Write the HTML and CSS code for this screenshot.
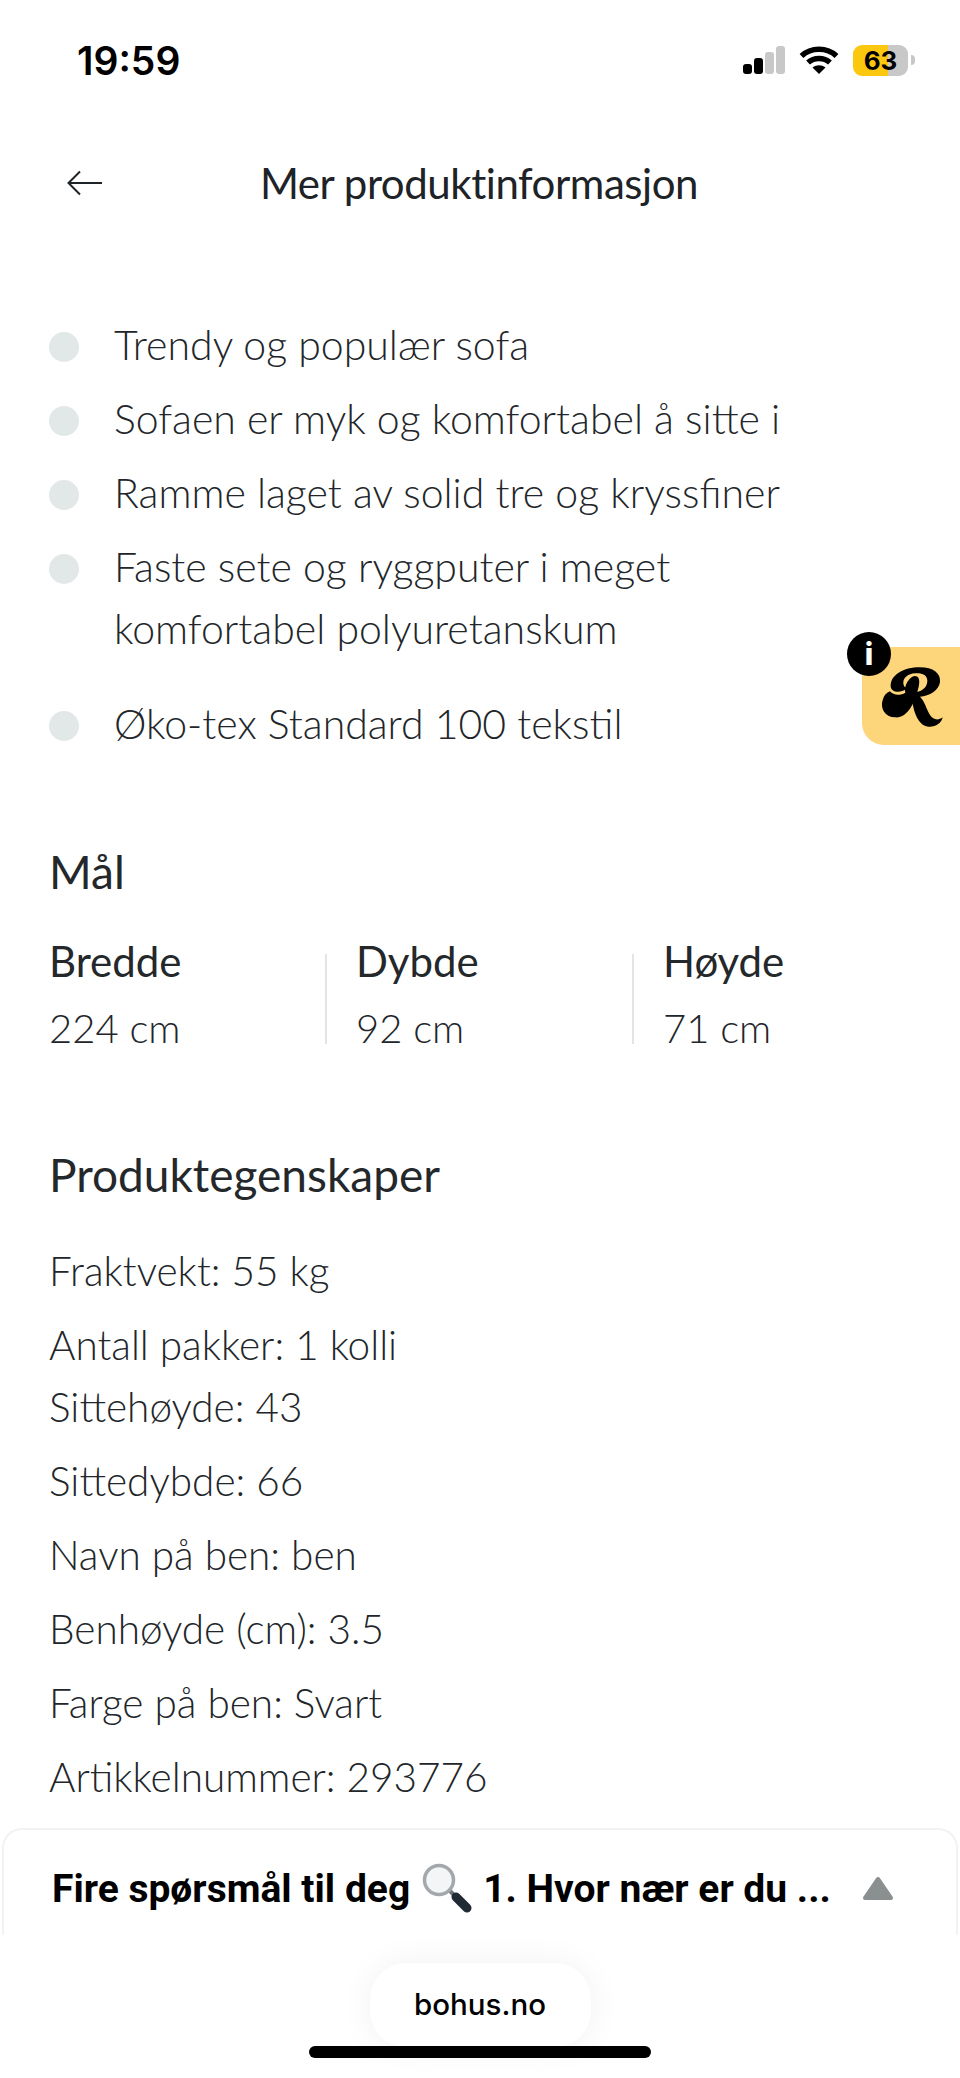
FILE: index.html
```html
<!DOCTYPE html>
<html lang="no">
<head>
<meta charset="utf-8">
<title>Mer produktinformasjon</title>
<link rel="stylesheet" href="styles.css">
</head>
<body>
<div class="page">
  <div class="status">
    <span class="time">19:59</span>
    <div class="status-icons">
      <svg class="signal" width="42" height="30" viewBox="0 0 42 30"><rect x="0" y="19" width="9" height="10" rx="3" fill="#000"/><rect x="11" y="13" width="9" height="16" rx="3" fill="#000"/><rect x="22" y="7" width="9" height="22" rx="3" fill="#c8c8c8"/><rect x="33" y="1" width="9" height="28" rx="3" fill="#c8c8c8"/></svg>
      <svg class="wifi" width="40" height="30" viewBox="0 0 40 30"><path d="M2.500 11C12 2 28 2 37.500 11M9 17.500C15 12 25 12 31 17.500" fill="none" stroke="#000" stroke-width="5.500"/><path d="M13.500 22.500C17.500 19.500 22.500 19.500 26.500 22.500L20 29Z" fill="#000"/></svg>
      <div class="battery"><span class="battery-level">63</span></div>
      <span class="battery-tip"></span>
    </div>
  </div>

  <header class="nav">
    <svg class="back" width="36" height="26" viewBox="0 0 36 26"><path d="M35 13H2M13 1.500L1.500 13L13 24.500" fill="none" stroke="#1d2327" stroke-width="2"/></svg>
    <h1 class="title">Mer produktinformasjon</h1>
  </header>

  <ul class="bullets">
    <li>Trendy og populær sofa</li>
    <li>Sofaen er myk og komfortabel å sitte i</li>
    <li>Ramme laget av solid tre og kryssfiner</li>
    <li class="two-line">Faste sete og ryggputer i meget<br>komfortabel polyuretanskum</li>
    <li>Øko-tex Standard 100 tekstil</li>
  </ul>

  <h2 class="heading measures-heading">Mål</h2>
  <div class="measures">
    <div class="measure"><strong>Bredde</strong><span>224 cm</span></div>
    <div class="measure"><strong>Dybde</strong><span>92 cm</span></div>
    <div class="measure"><strong>Høyde</strong><span>71 cm</span></div>
  </div>

  <h2 class="heading props-heading">Produktegenskaper</h2>
  <div class="props">
    <p>Fraktvekt: 55 kg</p>
    <p class="tight">Antall pakker: 1 kolli</p>
    <p>Sittehøyde: 43</p>
    <p>Sittedybde: 66</p>
    <p>Navn på ben: ben</p>
    <p>Benhøyde (cm): 3.5</p>
    <p>Farge på ben: Svart</p>
    <p>Artikkelnummer: 293776</p>
  </div>

  <div class="survey">
    <span class="survey-text">Fire spørsmål til deg</span>
    <svg class="loupe" width="50" height="50" viewBox="0 0 50 50"><path d="M27 27L33 33" stroke="#6d7278" stroke-width="4"/><path d="M34 34L45 45" stroke="#1f2a33" stroke-width="9" stroke-linecap="round"/><circle cx="17" cy="17" r="14.500" fill="#f3f5f7" stroke="#a4a8ad" stroke-width="3.500"/></svg>
    <span class="survey-text">1. Hvor nær er du ...</span>
    <svg class="caret" width="32" height="26" viewBox="0 0 32 26"><path d="M16 3L29 22H3Z" fill="#8a9090" stroke="#8a9090" stroke-width="4" stroke-linejoin="round"/></svg>
  </div>

  <div class="browser">
    <div class="url">bohus.no</div>
    <div class="home-bar"></div>
  </div>

  <aside class="reward">
    <svg class="reward-logo" width="90" height="80" viewBox="0 0 270 240"><path d="M62 78C62 45 100 22 150 22C190 22 212 40 210 65C208 90 178 108 150 110C165 125 168 145 180 165C190 180 205 182 218 172C215 190 195 202 175 200C150 198 138 170 132 150C128 130 124 116 112 112L120 96C150 100 172 85 172 62C172 45 155 38 135 40C115 42 100 52 100 68C100 78 106 84 112 84C96 100 62 100 62 78Z" fill="#000"/><path d="M134 48C148 48 150 62 146 80C134 130 112 175 75 172C45 172 30 145 38 120C42 106 50 98 60 94C70 106 90 108 106 98C100 75 120 50 134 48Z" fill="#000"/></svg>
    <span class="reward-info">i</span>
  </aside>
</div>
</body>
</html>
```
FILE: styles.css
```css
* { box-sizing: border-box; }
html, body { margin: 0; padding: 0; background: #fff; }
.page {
  position: relative;
  width: 960px;
  height: 2078px;
  overflow: hidden;
  background: #fff;
  color: #1d2327;
  font-family: "Lato", "Liberation Sans", sans-serif;
  font-weight: 300;
}
.status {
  height: 140px;
  padding: 38px 45px 0 77px;
  display: flex;
  justify-content: space-between;
  align-items: flex-start;
}
.time {
  font-family: "Inter", "Liberation Sans", sans-serif;
  font-weight: 600;
  font-size: 39px;
  line-height: 46px;
  color: #000;
}
.status-icons { display: flex; align-items: center; height: 44px; }
.signal { margin-right: 14px; }
.wifi { margin-right: 14px; }
.battery {
  width: 55px;
  height: 31px;
  border-radius: 9px;
  background: linear-gradient(90deg, #fcc80f 0 64%, #c8c8c8 64% 100%);
  display: flex;
  align-items: center;
  justify-content: center;
}
.battery-level {
  font-family: "Inter", "Liberation Sans", sans-serif;
  font-weight: 700;
  font-size: 26px;
  color: #000;
}
.battery-tip {
  width: 4px;
  height: 10px;
  margin-left: 3px;
  background: #c8c8c8;
  border-radius: 0 4px 4px 0;
}
.nav {
  position: relative;
  height: 88px;
  padding: 0 2px 2px 0;
  display: flex;
  align-items: center;
  justify-content: center;
}
.back { position: absolute; left: 67px; top: 30px; }
.title { margin: 0; font-size: 42px; line-height: 48px; font-weight: 400; letter-spacing: -0.45px; }
.bullets { list-style: none; margin: 0; padding: 86px 0 0 114px; }
.bullets li {
  position: relative;
  font-size: 41px;
  line-height: 62px;
  margin-bottom: 12px;
  color: #22262a;
}
.bullets li::before {
  content: "";
  position: absolute;
  left: -65px;
  top: 18px;
  width: 30px;
  height: 30px;
  border-radius: 50%;
  background: #e2e8e8;
}
.bullets .two-line { margin-bottom: 33px; }
.heading { margin: 0; padding-left: 49px; font-size: 46px; line-height: 50px; font-weight: 400; color: #24282b; }
.measures-heading { padding-top: 80px; box-sizing: content-box; }
.measures { display: grid; grid-template-columns: 276px 307px 1fr; margin: 39px 0 0 49px; }
.measure { display: flex; flex-direction: column; position: relative; }
.measure + .measure { padding-left: 31px; }
.measure + .measure::before {
  content: "";
  position: absolute;
  left: 0;
  top: 18px;
  bottom: 9px;
  width: 2px;
  background: #e3e5e5;
}
.measure strong { font-size: 42px; line-height: 50px; font-weight: 400; color: #24282b; }
.measure span { font-size: 40px; line-height: 50px; margin-top: 17px; color: #22262a; }
.props-heading { padding-top: 97px; box-sizing: content-box; }
.props { margin-top: 40px; padding-left: 49px; font-size: 40.500px; }
.props p { margin: 0 0 12px; line-height: 62px; color: #22262a; }
.props .tight { margin-bottom: 0; }
.survey {
  position: absolute;
  left: 2px;
  right: 2px;
  top: 1828px;
  height: 107px;
  padding: 12px 48px 0 48px;
  display: flex;
  align-items: center;
  border: 2px solid #f2f2f2;
  border-bottom: 0;
  border-radius: 20px 20px 0 0;
  background: #fff;
}
.survey-text {
  font-family: "Roboto", "Liberation Sans", sans-serif;
  font-weight: 700;
  font-size: 39px;
  color: #000;
  white-space: nowrap;
}
.loupe { margin: -2px 11px 0 12px; }
.caret { margin-left: auto; margin-right: 14px; }
.browser {
  position: absolute;
  left: 0;
  right: 0;
  top: 1935px;
  bottom: 0;
  background: #fff;
  display: flex;
  flex-direction: column;
  align-items: center;
}
.url {
  width: 221px;
  height: 84px;
  margin-top: 28px;
  padding-bottom: 2px;
  border-radius: 36px;
  background: #fff;
  box-shadow: 0 0 34px rgba(0,0,0,0.06);
  display: flex;
  align-items: center;
  justify-content: center;
  font-family: "Inter", "Liberation Sans", sans-serif;
  font-weight: 500;
  font-size: 29.500px;
  color: #000;
}
.home-bar { width: 342px; height: 12px; margin-top: -1px; border-radius: 6px; background: #000; }
.reward {
  position: absolute;
  left: 862px;
  top: 647px;
  width: 98px;
  height: 98px;
  background: #fdd57a;
  border-radius: 14px 0 0 22px;
}
.reward-logo { position: absolute; left: 8px; top: 13px; }
.reward-info {
  position: absolute;
  left: -15px;
  top: -15px;
  width: 44px;
  height: 44px;
  border-radius: 50%;
  background: #000;
  color: #fff;
  display: flex;
  align-items: center;
  justify-content: center;
  font-family: "Inter", "Liberation Sans", sans-serif;
  font-weight: 800;
  font-size: 30px;
}
```
